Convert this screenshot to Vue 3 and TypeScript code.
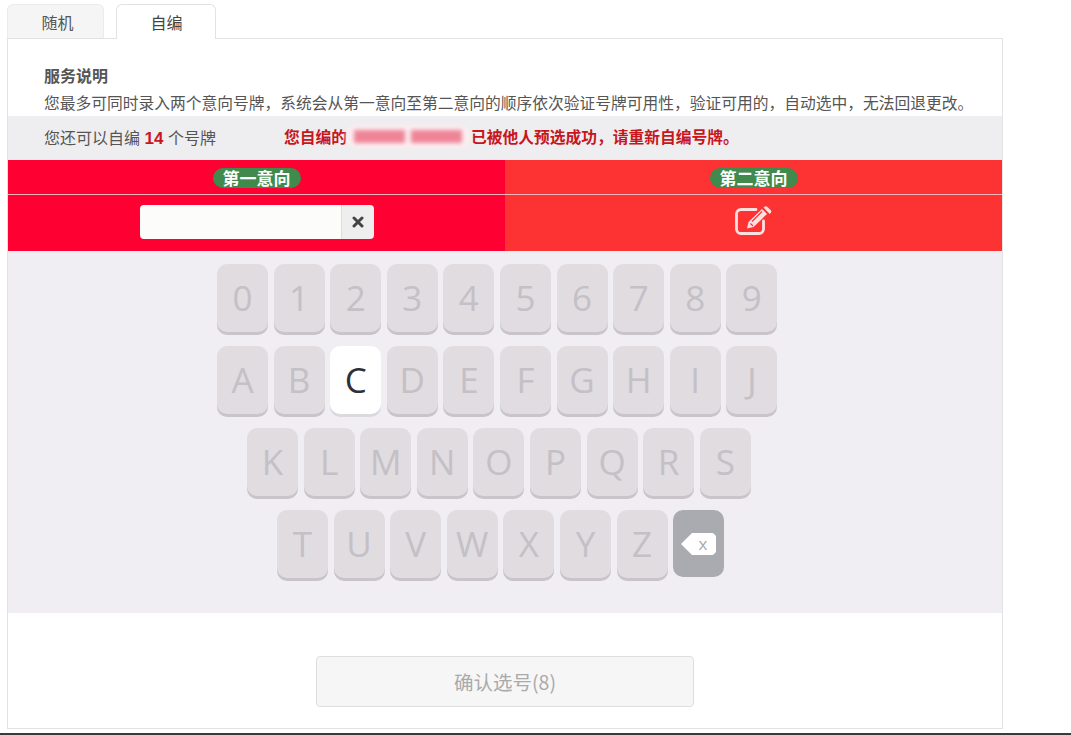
<script setup lang="ts">
interface KeyRow { cls: string; keys: string[] }
const rows: KeyRow[] = [
  { cls: 'r0', keys: '0123456789'.split('') },
  { cls: 'r1', keys: 'ABCDEFGHIJ'.split('') },
  { cls: 'r2', keys: 'KLMNOPQRS'.split('') },
  { cls: 'r3', keys: 'TUVWXYZ'.split('') },
]
</script>

<template>
  <div class="page">
    <div class="tabs">
      <div class="tab">随机</div>
      <div class="tab active">自编</div>
    </div>
    <div class="panel">
      <div class="intro">
        <h3>服务说明</h3>
        <p>您最多可同时录入两个意向号牌，系统会从第一意向至第二意向的顺序依次验证号牌可用性，验证可用的，自动选中，无法回退更改。</p>
      </div>
      <div class="notice">
        <div class="remain">您还可以自编 <b>14</b> 个号牌</div>
        <div class="warn">您自编的<span class="mask"><i></i><i></i></span>已被他人预选成功，请重新自编号牌。</div>
      </div>
      <div class="wishes">
        <div class="cell head first"><span class="pill">第一意向</span></div>
        <div class="cell head second"><span class="pill">第二意向</span></div>
        <div class="cell body first">
          <div class="field">
            <div class="input"></div>
            <div class="clear">
              <svg width="12" height="12" viewBox="0 0 12 12"><path d="M2 2l8 8M10 2l-8 8" stroke="#444" stroke-width="3" stroke-linecap="round" /></svg>
            </div>
          </div>
        </div>
        <div class="cell body second">
          <svg class="edit" width="37" height="29" viewBox="0 0 37 29" fill="none">
            <path d="M21 3.500H6a4.500 4.500 0 0 0-4.500 4.500v15A4.500 4.500 0 0 0 6 27.500h18a4.500 4.500 0 0 0 4.500-4.500v-8" stroke="#fde0e0" stroke-width="2.800" stroke-linecap="round" />
            <path d="M12 22.500l1.500-6.500L27 3l5 5-13.500 13z" fill="#fde0e0" />
            <path d="M28.500 1.600l1.300-1a2 2 0 0 1 2.400.2l3.600 3.500a2 2 0 0 1 .1 2.500l-1.200 1.200z" fill="#fde0e0" />
            <path d="M15.500 17.500l2.500 2.500M17 15.500l10-10" stroke="#fd3233" stroke-width="1.200" />
          </svg>
        </div>
      </div>
      <div class="keyboard">
        <div v-for="row in rows" :key="row.cls" class="row" :class="row.cls">
          <div v-for="k in row.keys" :key="k" class="key" :class="{ on: k === 'C' }">{{ k }}</div>
          <div v-if="row.cls === 'r3'" class="key back">
            <svg width="36" height="24" viewBox="0 0 36 24">
              <path d="M0 12L11 1h21l3 3v16l-3 3H11z" fill="#fff" />
              <text x="22" y="17.500" text-anchor="middle" class="xmark">x</text>
            </svg>
          </div>
        </div>
      </div>
      <div class="footer">
        <button class="confirm" type="button">确认选号(8)</button>
      </div>
    </div>
    <div class="strip"></div>
  </div>
</template>

<style>
html, body { margin: 0; background: #fff; }
</style>

<style scoped>
.page {
  height: 735px;
  overflow: hidden;
  padding: 4px 0 0 7px;
  box-sizing: border-box;
  font-family: "Noto Sans CJK SC", "Liberation Sans", sans-serif;
  color: #555;
  background: #fff;
}
.tabs { display: flex; gap: 12px; height: 34px; position: relative; z-index: 1; }
.tab {
  width: 97px;
  height: 34px;
  box-sizing: border-box;
  padding-left: 4px;
  border: 1px solid #ebebeb;
  border-bottom: 0;
  border-radius: 6px 6px 0 0;
  background: #f5f5f5;
  font-size: 16px;
  line-height: 35px;
  text-align: center;
}
.tab.active { width: 100px; height: 35px; padding-left: 1px; background: #fff; border-color: #e2e2e2; color: #444; }
.panel { width: 996px; height: 691px; box-sizing: border-box; border: 1px solid #e2e2e2; background: #fff; }
.intro { height: 77px; padding: 25px 0 0 36px; box-sizing: border-box; }
.intro h3 { margin: 0; font-size: 16px; line-height: 22px; font-weight: 700; color: #555; }
.intro p { margin: 6px 0 0; font-size: 15.750px; line-height: 22px; white-space: nowrap; }
.notice {
  height: 44px;
  display: flex;
  align-items: center;
  box-sizing: border-box;
  padding: 0 0 3px 36px;
  background: #eeedef;
  font-size: 16px;
  white-space: nowrap;
}
.remain { width: 240px; flex: none; }
.remain b { margin: 0 1px; color: #c8161d; font-family: "Liberation Sans", sans-serif; font-size: 17px; }
.warn { color: #c8161d; font-weight: 700; display: flex; align-items: center; font-size: 15.750px; }
.mask {
  display: flex;
  width: 124px;
  height: 23px;
  margin: 0 1px 0 -1px;
  gap: 6px;
  padding: 0 8px;
  box-sizing: border-box;
  background: #fbeef1;
  border-radius: 11px;
  filter: blur(2px);
  align-items: center;
}
.mask i { flex: 1; height: 13px; background: #ee8596; }
.wishes { display: grid; grid-template-columns: 497px 497px; grid-template-rows: 35px 56px; }
.cell { display: flex; justify-content: center; box-sizing: border-box; }
.first { background: #fe0032; }
.second { background: #fd3233; }
.head { border-bottom: 1px solid #f7b4bd; align-items: center; padding-top: 1px; }
.pill {
  display: block;
  width: 88px;
  height: 20px;
  border-radius: 10px;
  background: #3f8a4c;
  color: #fff;
  font-size: 17px;
  font-weight: 700;
  line-height: 20px;
  text-align: center;
}
.body.first { padding-top: 10px; }
.body.second { padding: 11px 1px 0 0; }
.field { display: flex; width: 234px; height: 34px; border-radius: 4px; overflow: hidden; }
.input { flex: 1; background: #fcfcfa; }
.clear { width: 32px; display: flex; align-items: center; justify-content: center; background: #eeeeee; border-left: 1px solid #ddd; }
.edit { display: block; }
.keyboard { height: 362px; box-sizing: border-box; padding-top: 13px; background: #f0eef2; font-family: "Open Sans", sans-serif; }
.row { display: flex; gap: 5.600px; height: 71px; margin-bottom: 11px; }
.r0, .r1 { padding-left: 209px; }
.r2 { padding-left: 239px; }
.r3 { padding-left: 269px; }
.key {
  width: 51px;
  height: 68px;
  flex: none;
  border-radius: 10px;
  background: #e0dce0;
  box-shadow: 0 3px 0 #c8c4c9;
  color: #c4c0c6;
  font-size: 35px;
  line-height: 67px;
  text-align: center;
}
.key.on { background: #fff; color: #2f2f38; box-shadow: 0 3px 0 #dcd9de; }
.key.back { height: 67px; background: #a9abb0; box-shadow: none; display: flex; align-items: center; justify-content: center; }
.xmark { font-size: 17px; fill: #a9a9ad; font-family: "Open Sans", sans-serif; }
.footer { padding: 43px 0 0 308px; }
.confirm {
  display: block;
  width: 378px;
  height: 51px;
  padding: 0;
  border: 1px solid #dedede;
  border-radius: 4px;
  background: #f6f6f7;
  color: #aaa;
  font-family: "Noto Sans CJK SC", sans-serif;
  font-size: 19.500px;
}
.strip { height: 2px; margin: 4px 0 0 -7px; background: #3a3a3a; }
</style>
